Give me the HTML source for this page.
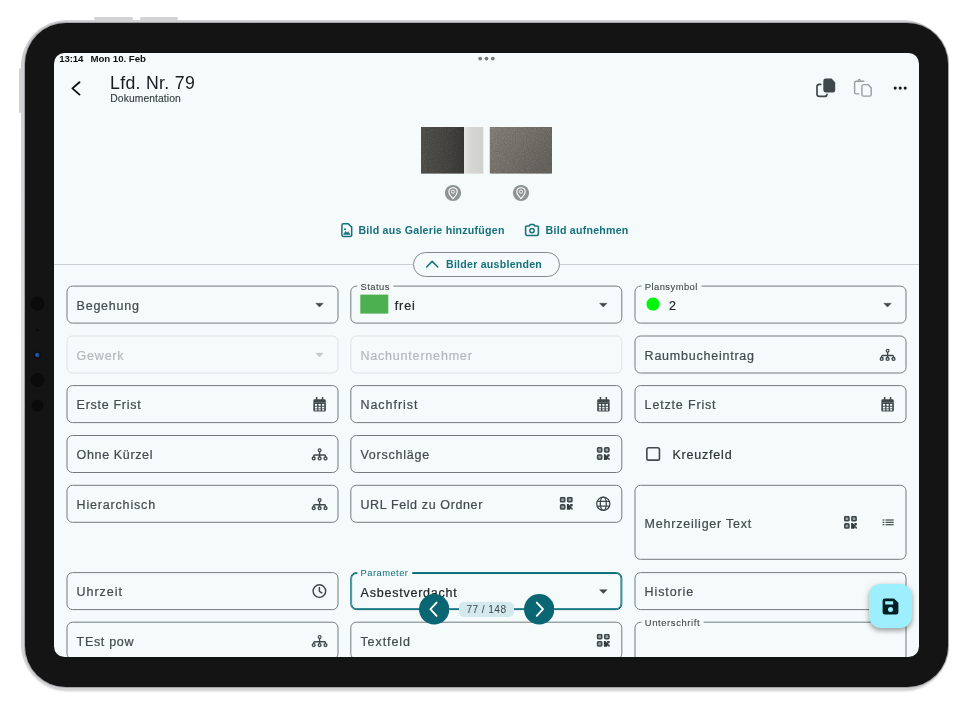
<!DOCTYPE html>
<html lang="de"><head><meta charset="utf-8"><title>Lfd. Nr. 79</title>
<style>
*{box-sizing:border-box;margin:0;padding:0}
html,body{width:974px;height:720px;background:#fff;overflow:hidden}
body{position:relative;font-family:"Liberation Sans",sans-serif;color:#171d1e}
.abs{position:absolute}
#rim{left:20.5px;top:19.5px;width:928px;height:670px;border-radius:46px;background:linear-gradient(180deg,#d4d4d7,#cbcbce 4px,#dededf 50%,#d2d2d5)}
#shadow{left:23px;top:24px;width:925px;height:666.5px;border-radius:44px;background:#c9c9cb;filter:blur(.8px)}
#body{left:24.5px;top:23.3px;width:923.2px;height:663.3px;border-radius:41px;background:#141414;box-shadow:0 0 0 1px #a4a4a9}
.btn{background:#d2d2d6;border-radius:1.5px}
#screen{opacity:.999;left:0;top:0;width:974px;height:720px;clip-path:inset(53px 55px 63px 54px round 10.5px);background:#f5fafb}
.f{position:absolute;width:272px;height:38px;border:1px solid #737d7f;border-radius:6px;transform:translate(var(--dx),var(--dy))}
.f.dis{border-color:#dde3e4}
.f.foc{border:1px solid #006874;box-shadow:inset 0 0 0 .8px #006874}
.t{position:absolute;left:9.1px;top:50%;margin-top:-7px;font-size:12.5px;letter-spacing:.78px;color:#434c4e;-webkit-text-stroke:.22px currentColor;white-space:nowrap;line-height:16px}
.t.v{color:#22282a}
.dis .t{color:#b4babb}
.lb{position:absolute;top:-6.5px;left:5.8px;padding:0 3.5px;-webkit-text-stroke:.1px currentColor;background:#f5fafb;font-size:9.4px;letter-spacing:.45px;line-height:11px;color:#3f484a;white-space:nowrap}
.foc .lb{color:#0a707c;top:-5.9px;-webkit-text-stroke:0}
.ic{position:absolute}
.c1{left:66px;--dx:.5px}.c2{left:350px;--dx:.3px}.c3{left:634px;--dx:.5px}
.r1{top:285px;--dy:.6px}.r2{top:335px;--dy:.5px}.r3{top:385px;--dy:.1px}.r4{top:435px;--dy:0px}.r5{top:484px;--dy:.8px}.r6{top:572px;--dy:.1px}.r7{top:621px;--dy:.7px}
.tb{position:absolute;font-weight:bold;font-size:10.6px;color:#14717c;white-space:nowrap;line-height:13px;letter-spacing:.25px}
</style></head><body>
<div class="abs" id="shadow"></div>
<div class="abs" id="rim"></div>
<div class="abs btn" style="left:94px;top:17.3px;width:38.5px;height:3px"></div>
<div class="abs btn" style="left:139.5px;top:17.3px;width:38px;height:3px"></div>
<div class="abs btn" style="left:18.8px;top:68px;width:3px;height:44.5px"></div>
<div class="abs" id="body"></div>
<svg class="abs" style="left:26px;top:290px" width="24" height="130" viewBox="0 0 24 130"><circle cx="11.5" cy="13.8" r="7" fill="#0b0b0b"/><circle cx="11.5" cy="40" r="1" fill="#070707"/><circle cx="11.5" cy="65" r="3.6" fill="#0c0f14"/><circle cx="11.3" cy="65" r="2.2" fill="#1c4a8c"/><circle cx="10.7" cy="64.7" r="1" fill="#2f68b8"/><circle cx="11.5" cy="90" r="7" fill="#0b0b0b"/><circle cx="11.5" cy="115.5" r="6" fill="#0b0b0b"/></svg>
<div class="abs" id="screen">
<!--C1-->
<!-- status bar -->
<div class="abs" style="left:59.3px;top:53.2px;font-size:9.7px;font-weight:bold;line-height:11px;color:#111;white-space:nowrap;letter-spacing:-.2px">13:14</div>
<div class="abs" style="left:90.4px;top:53.2px;font-size:9.7px;font-weight:bold;line-height:11px;color:#111;white-space:nowrap;letter-spacing:-.04px">Mon 10. Feb</div>
<svg class="abs" style="left:476px;top:54px" width="22" height="10" viewBox="0 0 22 10"><g fill="#77797a"><circle cx="4.2" cy="4.6" r="1.9"/><circle cx="10.5" cy="4.6" r="1.9"/><circle cx="16.8" cy="4.6" r="1.9"/></g></svg>
<!-- app bar -->
<svg class="abs" style="left:68px;top:78px" width="16" height="20" viewBox="0 0 16 20"><path d="M11.5 4.2 L4.4 10.4 L11.5 16.6" fill="none" stroke="#0e1314" stroke-width="1.9" stroke-linecap="round" stroke-linejoin="round"/></svg>
<div class="abs" style="left:110px;top:71.7px;font-size:17.7px;line-height:22px;color:#171d1e;white-space:nowrap;letter-spacing:.32px">Lfd. Nr. 79</div>
<div class="abs" style="left:110.3px;top:92.7px;font-size:10.3px;line-height:12px;color:#343c3e;white-space:nowrap;letter-spacing:.1px;-webkit-text-stroke:.12px currentColor">Dokumentation</div>
<!-- appbar icons -->
<svg class="abs" id="i-copy" style="left:814px;top:77px" width="23" height="23" viewBox="0 0 23 23"><path d="M11.7 1.6 H17.6 L21.2 5.6 V13.2 A2.3 2.3 0 0 1 18.9 15.5 H11.7 A2.4 2.4 0 0 1 9.3 13.1 V4 A2.4 2.4 0 0 1 11.7 1.6 Z" fill="#3f484a"/><path d="M6.7 7.4 H5.4 A2.4 2.4 0 0 0 3 9.8 V17 A2.4 2.4 0 0 0 5.4 19.4 H10.6 A2.4 2.4 0 0 0 13 17.3" fill="none" stroke="#3f484a" stroke-width="1.7" stroke-linecap="round"/></svg>
<svg class="abs" id="i-paste" style="left:851px;top:77px" width="23" height="23" viewBox="0 0 23 23"><g fill="none" stroke="#969e9f" stroke-width="1.4" stroke-linecap="round" stroke-linejoin="round"><path d="M7.9 16.9 H5.2 A1.6 1.6 0 0 1 3.6 15.3 V5.8 A1.6 1.6 0 0 1 5.2 4.2 H12.9"/><circle cx="8.3" cy="3.5" r="1.1" stroke-width="1.1"/><path d="M12.4 7.6 H17 L20.2 10.8 V17.5 A1.6 1.6 0 0 1 18.6 19.1 H12.5 A1.6 1.6 0 0 1 10.9 17.5 V9.2 A1.6 1.6 0 0 1 12.4 7.6 Z"/></g></svg>
<svg class="abs" style="left:891px;top:84px" width="18" height="8" viewBox="0 0 18 8"><g fill="#171d1e"><circle cx="4.2" cy="4.1" r="1.55"/><circle cx="9.2" cy="4.1" r="1.55"/><circle cx="14.2" cy="4.1" r="1.55"/></g></svg>
<!-- photos -->
<svg class="abs" style="left:421px;top:127px" width="131" height="47" viewBox="0 0 131 47">
<defs>
<filter id="nz" x="0" y="0" width="100%" height="100%"><feTurbulence type="fractalNoise" baseFrequency="0.9" numOctaves="2" seed="3" result="n"/><feColorMatrix in="n" type="matrix" values="0 0 0 0 0  0 0 0 0 0  0 0 0 0 0  .55 .55 .55 0 -.62"/><feComposite in2="SourceGraphic" operator="in"/></filter>
<linearGradient id="g1" x1="0" x2="1" y1="0" y2="0"><stop offset="0" stop-color="#56554f"/><stop offset=".6" stop-color="#4a4946"/><stop offset="1" stop-color="#3b3b39"/></linearGradient>
<linearGradient id="g2" x1="0" x2="1" y1="0" y2="0"><stop offset="0" stop-color="#e4e4e1"/><stop offset=".35" stop-color="#d6d7d4"/><stop offset="1" stop-color="#cfd1ce"/></linearGradient>
<linearGradient id="g3" x1="0" x2="1" y1="0" y2=".6"><stop offset="0" stop-color="#8a857d"/><stop offset=".5" stop-color="#7c7770"/><stop offset="1" stop-color="#6b6762"/></linearGradient>
</defs>
<rect x="0" y="0" width="43" height="46.6" fill="url(#g1)"/>
<rect x="43" y="0" width="19.3" height="46.6" fill="url(#g2)"/>
<rect x="0" y="0" width="43" height="46.6" fill="#000" filter="url(#nz)" opacity=".35"/>
<rect x="68.8" y="0" width="62.2" height="46.6" fill="url(#g3)"/>
<rect x="68.8" y="0" width="62.2" height="46.6" fill="#000" filter="url(#nz)" opacity=".3"/>
</svg>
<svg class="abs pin" style="left:443.6px;top:184.4px" width="18" height="18" viewBox="0 0 18 18"><circle cx="9" cy="9" r="8.1" fill="#8f9394"/><path d="M9 3.7 C6.4 3.7 4.8 5.6 4.8 7.8 C4.8 10.4 7.6 13.2 9 14.6 C10.4 13.2 13.2 10.4 13.2 7.8 C13.2 5.6 11.6 3.7 9 3.7 Z" fill="none" stroke="#fff" stroke-width="1.1" stroke-linejoin="round"/><circle cx="9" cy="7.7" r="1.6" fill="none" stroke="#fff" stroke-width=".9"/></svg>
<svg class="abs pin" style="left:512.1px;top:184.4px" width="18" height="18" viewBox="0 0 18 18"><circle cx="9" cy="9" r="8.1" fill="#8f9394"/><path d="M9 3.7 C6.4 3.7 4.8 5.6 4.8 7.8 C4.8 10.4 7.6 13.2 9 14.6 C10.4 13.2 13.2 10.4 13.2 7.8 C13.2 5.6 11.6 3.7 9 3.7 Z" fill="none" stroke="#fff" stroke-width="1.1" stroke-linejoin="round"/><circle cx="9" cy="7.7" r="1.6" fill="none" stroke="#fff" stroke-width=".9"/></svg>
<!-- text buttons -->
<svg class="abs" id="i-gal" style="left:340px;top:222px" width="14" height="16" viewBox="0 0 14 16"><path d="M3.4 1.7 H8.3 L11.7 5.1 V12.9 A1.5 1.5 0 0 1 10.2 14.4 H3.4 A1.5 1.5 0 0 1 1.9 12.9 V3.2 A1.5 1.5 0 0 1 3.4 1.7 Z" fill="none" stroke="#14717c" stroke-width="1.5" stroke-linejoin="round"/><path d="M3.5 12.4 L5.7 9.3 L7 10.9 L8.2 9.7 L10.2 12.4 Z" fill="#14717c" stroke="#14717c" stroke-width=".5" stroke-linejoin="round"/><circle cx="5" cy="7.3" r="1" fill="#14717c"/></svg>
<div class="tb" style="left:358.4px;top:223.6px">Bild aus Galerie hinzufügen</div>
<svg class="abs" id="i-cam" style="left:523.8px;top:222px" width="16" height="16" viewBox="0 0 16 16"><path d="M5.4 3.9 L6.2 2.5 H9.8 L10.6 3.9 H13 A1.4 1.4 0 0 1 14.4 5.3 V12 A1.4 1.4 0 0 1 13 13.4 H3 A1.4 1.4 0 0 1 1.6 12 V5.3 A1.4 1.4 0 0 1 3 3.9 Z" fill="none" stroke="#14717c" stroke-width="1.55" stroke-linejoin="round"/><circle cx="8" cy="8.6" r="2.2" fill="none" stroke="#14717c" stroke-width="1.45"/></svg>
<div class="tb" style="left:545.6px;top:223.6px">Bild aufnehmen</div>
<!-- divider + pill -->
<div class="abs" style="left:54px;top:263.6px;width:865px;height:1px;background:#cad1d2"></div>
<div class="abs" style="left:413px;top:252px;width:147px;height:24.6px;border:1px solid #838d8f;border-radius:13px;background:#f5fafb"></div>
<svg class="abs" style="left:424px;top:258px" width="16" height="12" viewBox="0 0 16 12"><path d="M2.6 9 L8.2 3.4 L13.8 9" fill="none" stroke="#14717c" stroke-width="1.5" stroke-linecap="round" stroke-linejoin="round"/></svg>
<div class="tb" style="left:446px;top:257.8px">Bilder ausblenden</div>
<!--/C1-->
<!--C2-->
<!-- icon defs -->
<svg width="0" height="0" style="position:absolute"><defs>
<symbol id="dd" viewBox="0 0 10 6"><path d="M1.3 .6 H8.7 L5 4.5 Z" fill="#3f484a" stroke="#3f484a" stroke-width=".5" stroke-linejoin="round"/></symbol>
<symbol id="dd2" viewBox="0 0 10 6"><path d="M1.3 .6 H8.7 L5 4.5 Z" fill="#c3c9ca" stroke="#c3c9ca" stroke-width=".5" stroke-linejoin="round"/></symbol>
<symbol id="cal" viewBox="0 0 14 16"><path d="M3.4 0 h1.5 v2.2 h4.4 V0 h1.5 v2.2 h1.2 a1.35 1.35 0 0 1 1.35 1.35 V5.6 H.85 V3.55 A1.35 1.35 0 0 1 2.2 2.2 h1.2 Z" fill="#3f484a"/><path d="M.85 5.6 H13.35 V13.15 a1.35 1.35 0 0 1 -1.35 1.35 H2.2 A1.35 1.35 0 0 1 .85 13.15 Z M2.5 6.9 v1.8 h2.2 V6.9 Z M6 6.9 v1.8 h2.2 V6.9 Z M9.5 6.9 v1.8 h2.2 V6.9 Z M2.5 9.6 v1.7 h2.2 V9.6 Z M6 9.6 v1.7 h2.2 V9.6 Z M9.5 9.6 v1.7 h2.2 V9.6 Z M2.5 12.2 v1.3 h2.2 v-1.3 Z M6 12.2 v1.3 h2.2 v-1.3 Z M9.5 12.2 v1.3 h2.2 v-1.3 Z" fill="#3f484a" fill-rule="evenodd"/></symbol>
<symbol id="site" viewBox="0 0 18 14"><g fill="none" stroke="#3f484a" stroke-width="1.35"><circle cx="9.1" cy="2.2" r="1.4" stroke-width="1.2"/><circle cx="3.2" cy="10.4" r="1.45"/><circle cx="9.1" cy="10.4" r="1.45"/><circle cx="15" cy="10.4" r="1.45"/><path d="M9.1 3.5 V8.9 M3.2 8.9 V8 a1 1 0 0 1 1 -1 H14 a1 1 0 0 1 1 1 V8.9"/></g></symbol>
<symbol id="qr" viewBox="0 0 14 14"><g fill="#9aa2a3" stroke="#3f484a" stroke-width="1.6"><rect x="1.25" y=".8" width="4.2" height="4.2" rx=".9"/><rect x="8.4" y=".8" width="4.2" height="4.2" rx=".9"/><rect x="1.25" y="8.05" width="4.2" height="4.2" rx=".9"/></g><path d="M7.6 7.25 h1.7 l1.6 2 V7.25 h2.4 V9.4 h-1.2 v1.5 h1.2 V13 h-1.2 v-1 h-1.2 v1 H7.6 Z" fill="#333b3d"/></symbol>
<symbol id="globe" viewBox="0 0 16 16"><g fill="none" stroke="#3f484a" stroke-width="1.3"><circle cx="8" cy="8" r="6.6"/><ellipse cx="8" cy="8" rx="3" ry="6.6"/><path d="M2.2 5.6 H13.8 M2.2 10.4 H13.8"/></g></symbol>
<symbol id="clock" viewBox="0 0 16 16"><g fill="none" stroke="#3f484a" stroke-width="1.45" stroke-linecap="round" stroke-linejoin="round"><circle cx="7.9" cy="8" r="6.3"/><path d="M7.9 4.4 V8.2 L10.3 9.8"/></g></symbol>
<symbol id="list" viewBox="0 0 14 10"><g fill="#3f484a"><rect x="2.1" y=".6" width="1.8" height="1.2"/><rect x="2.1" y="2.95" width="1.8" height="1.2"/><rect x="2.1" y="5.3" width="1.8" height="1.2"/><rect x="5" y=".6" width="8.2" height="1.2"/><rect x="5" y="2.95" width="8.2" height="1.2"/><rect x="5" y="5.3" width="8.2" height="1.2"/></g></symbol>
</defs></svg>
<!-- row 1 -->
<div class="f c1 r1"><span class="t" style="letter-spacing:0.75px">Begehung</span><svg class="ic" style="right:13.2px;top:15.7px" width="10" height="6"><use href="#dd"/></svg></div>
<div class="f c2 r1"><span class="lb">Status</span><span class="abs" style="left:8.8px;top:8.4px;width:28px;height:18.4px;background:#4caf50"></span><span class="t v" style="left:43.4px;letter-spacing:.9px">frei</span><svg class="ic" style="right:13.2px;top:15.7px" width="10" height="6"><use href="#dd"/></svg></div>
<div class="f c3 r1"><span class="lb">Plansymbol</span><span class="abs" style="left:11.4px;top:11.3px;width:12.6px;height:12.6px;border-radius:50%;background:#00f70c"></span><span class="t v" style="left:33.6px">2</span><svg class="ic" style="right:13.2px;top:15.7px" width="10" height="6"><use href="#dd"/></svg></div>
<!-- row 2 -->
<div class="f c1 r2 dis"><span class="t" style="letter-spacing:0.78px">Gewerk</span><svg class="ic" style="right:13.2px;top:15.7px" width="10" height="6"><use href="#dd2"/></svg></div>
<div class="f c2 r2 dis"><span class="t" style="letter-spacing:0.81px">Nachunternehmer</span></div>
<div class="f c3 r2"><span class="t" style="letter-spacing:0.77px">Raumbucheintrag</span><svg class="ic" style="right:8.8px;top:11.75px" width="18" height="14"><use href="#site"/></svg></div>
<!-- row 3 -->
<div class="f c1 r3"><span class="t" style="letter-spacing:0.71px">Erste Frist</span><svg class="ic" style="right:10.6px;top:10.6px" width="14" height="16"><use href="#cal"/></svg></div>
<div class="f c2 r3"><span class="t" style="letter-spacing:0.98px">Nachfrist</span><svg class="ic" style="right:10.6px;top:10.6px" width="14" height="16"><use href="#cal"/></svg></div>
<div class="f c3 r3"><span class="t" style="letter-spacing:0.83px">Letzte Frist</span><svg class="ic" style="right:10.6px;top:10.6px" width="14" height="16"><use href="#cal"/></svg></div>
<!-- row 4 -->
<div class="f c1 r4"><span class="t" style="letter-spacing:0.64px">Ohne Kürzel</span><svg class="ic" style="right:8.8px;top:11.75px" width="18" height="14"><use href="#site"/></svg></div>
<div class="f c2 r4"><span class="t" style="letter-spacing:0.76px">Vorschläge</span><svg class="ic" style="right:11.2px;top:11px" width="14" height="14"><use href="#qr"/></svg></div>
<svg class="abs" style="left:645px;top:446px" width="17" height="16" viewBox="0 0 17 16"><rect x="1.85" y="1.8" width="12.6" height="12.3" rx="1.7" fill="none" stroke="#3f484a" stroke-width="1.6"/></svg>
<div class="abs t v" style="left:672.4px;top:454.2px;letter-spacing:0.8px;color:#2e3638">Kreuzfeld</div>
<!-- row 5 -->
<div class="f c1 r5"><span class="t" style="letter-spacing:0.82px">Hierarchisch</span><svg class="ic" style="right:8.8px;top:11.75px" width="18" height="14"><use href="#site"/></svg></div>
<div class="f c2 r5"><span class="t" style="letter-spacing:0.62px">URL Feld zu Ordner</span><svg class="ic" style="right:48px;top:11px" width="14" height="14"><use href="#qr"/></svg><svg class="ic" style="right:10.2px;top:10.2px" width="16" height="16"><use href="#globe"/></svg></div>
<div class="f c3 r5" style="height:75px"><span class="t" style="letter-spacing:0.78px">Mehrzeiliger Text</span><svg class="ic" style="right:47.9px;top:29.6px" width="14" height="14"><use href="#qr"/></svg><svg class="ic" style="right:11.5px;top:33px" width="14" height="10"><use href="#list"/></svg></div>
<!-- row 6 -->
<div class="f c1 r6"><span class="t" style="letter-spacing:0.95px">Uhrzeit</span><svg class="ic" style="right:10.4px;top:10.2px" width="16" height="16"><use href="#clock"/></svg></div>
<div class="f c2 r6 foc"><span class="lb">Parameter</span><span class="t v" style="left:9.3px;margin-top:-6.4px;letter-spacing:0.77px">Asbestverdacht</span><svg class="ic" style="right:13.3px;top:15.9px" width="10" height="6"><use href="#dd"/></svg></div>
<div class="f c3 r6"><span class="t" style="letter-spacing:0.89px">Historie</span></div>
<!-- row 7 -->
<div class="f c1 r7"><span class="t" style="letter-spacing:0.68px">TEst pow</span><svg class="ic" style="right:8.8px;top:11.75px" width="18" height="14"><use href="#site"/></svg></div>
<div class="f c2 r7"><span class="t" style="letter-spacing:0.93px">Textfeld</span><svg class="ic" style="right:11.2px;top:11px" width="14" height="14"><use href="#qr"/></svg></div>
<div class="f c3 r7" style="height:60px"><span class="lb" style="letter-spacing:.62px">Unterschrift</span></div>
<!-- pager -->
<div class="abs" style="left:459px;top:601.8px;width:55px;height:15.4px;border-radius:5px;background:#d3e9ee"></div>
<div class="abs" style="left:459px;top:603.6px;width:55px;text-align:center;font-size:10.2px;line-height:12px;color:#3f484a;letter-spacing:.4px;white-space:nowrap">77 / 148</div>
<svg class="abs" style="left:418.6px;top:594.2px" width="30.4" height="30.4" viewBox="0 0 30.4 30.4"><circle cx="15.2" cy="15.2" r="15.2" fill="#0b6673"/><path d="M17.6 8.6 L11.4 15.2 L17.6 21.8" fill="none" stroke="#fff" stroke-width="1.9" stroke-linecap="round" stroke-linejoin="round"/></svg>
<svg class="abs" style="left:523.7px;top:594.2px" width="30.4" height="30.4" viewBox="0 0 30.4 30.4"><circle cx="15.2" cy="15.2" r="15.2" fill="#0b6673"/><path d="M12.8 8.6 L19 15.2 L12.8 21.8" fill="none" stroke="#fff" stroke-width="1.9" stroke-linecap="round" stroke-linejoin="round"/></svg>
<!-- fab -->
<div class="abs" style="left:868.9px;top:584.2px;width:43.6px;height:44px;border-radius:12px;background:#9eeffd;box-shadow:0 2.2px 4px rgba(0,0,0,.28),0 1px 8px rgba(0,0,0,.12)"></div>
<svg class="abs" id="i-save" style="left:881px;top:597px" width="19" height="19" viewBox="0 0 19 19"><path d="M3.8 1.6 H13 L17.4 5.8 V15.2 A2.2 2.2 0 0 1 15.2 17.4 H3.8 A2.2 2.2 0 0 1 1.6 15.2 V3.8 A2.2 2.2 0 0 1 3.8 1.6 Z M4.2 4.2 V7.4 H12.2 V4.2 Z M9.5 10 A2.5 2.5 0 1 0 9.5 15 A2.5 2.5 0 1 0 9.5 10 Z" fill="#001f24" fill-rule="evenodd"/></svg>
<!--/C2-->
</div>
</body></html>
